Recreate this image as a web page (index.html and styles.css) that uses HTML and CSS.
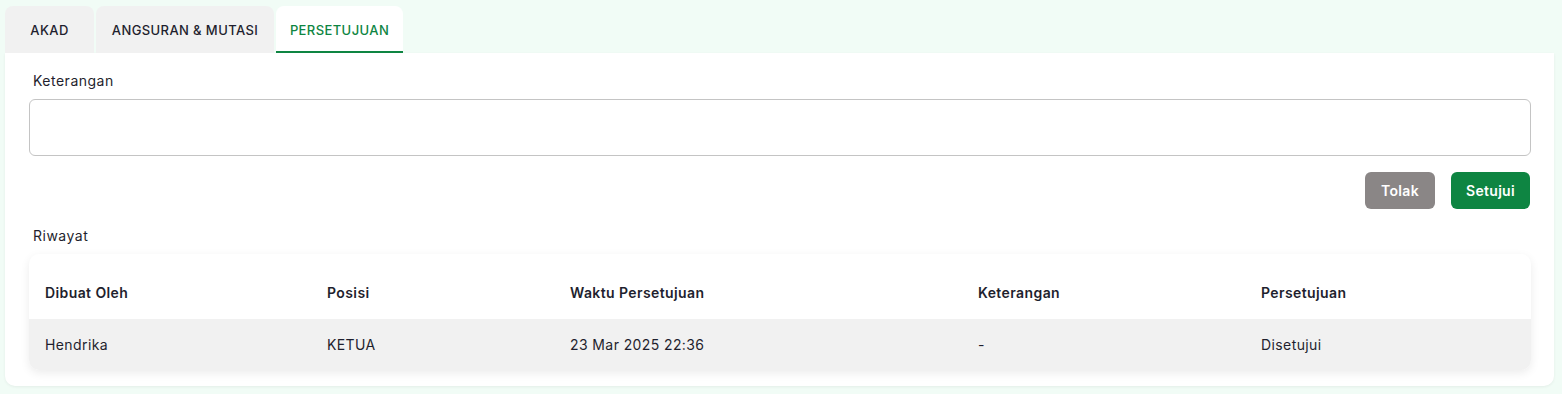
FILE: index.html
```html
<!DOCTYPE html>
<html lang="id">
<head>
    <meta charset="UTF-8">
    <meta name="viewport" content="width=device-width, initial-scale=1.0">
    <title>Persetujuan</title>
    <link rel="stylesheet" href="styles.css">
</head>
<body>
    <div class="tabs">
        <div class="tab tab-akad">AKAD</div>
        <div class="tab tab-angsuran">ANGSURAN &amp; MUTASI</div>
        <div class="tab tab-persetujuan active">PERSETUJUAN</div>
    </div>
    <div class="card">
        <label class="field-label" for="keterangan">Keterangan</label>
        <textarea id="keterangan" class="textarea"></textarea>
        <div class="actions">
            <button class="btn btn-reject">Tolak</button>
            <button class="btn btn-approve">Setujui</button>
        </div>
        <div class="field-label history-label">Riwayat</div>
        <div class="table-wrap">
            <table class="history">
                <thead>
                    <tr>
                        <th class="col-by">Dibuat Oleh</th>
                        <th class="col-pos">Posisi</th>
                        <th class="col-time">Waktu Persetujuan</th>
                        <th class="col-note">Keterangan</th>
                        <th class="col-status">Persetujuan</th>
                    </tr>
                </thead>
                <tbody>
                    <tr>
                        <td>Hendrika</td>
                        <td>KETUA</td>
                        <td>23 Mar 2025 22:36</td>
                        <td>-</td>
                        <td>Disetujui</td>
                    </tr>
                </tbody>
            </table>
        </div>
    </div>
</body>
</html>
```

FILE: styles.css
```css
body {
    font-family: Inter, "Open Sans", sans-serif;
    background-color: #f1fcf6;
    color: #1f1f2e;
    margin: 0;
    padding: 6px 8px 8px 5px;
    font-size: 14px;
}
.tabs {
    display: flex;
    gap: 2px;
}
.tab {
    height: 47px;
    display: flex;
    align-items: center;
    justify-content: center;
    background-color: #f1f1f1;
    border-radius: 8px 8px 0 0;
    font-size: 13px;
    font-weight: 500;
    letter-spacing: 0.4px;
    color: #1f1f2e;
    box-sizing: border-box;
}
.tab-akad {
    width: 89px;
}
.tab-angsuran {
    width: 178px;
}
.tab-persetujuan {
    width: 127px;
}
.tab.active {
    background-color: #fff;
    color: #0e8542;
    border-bottom: 2px solid #0e8542;
    padding-top: 2px;
}
.card {
    background-color: #fff;
    border-radius: 0 0 10px 10px;
    padding: 17px 23px 16px 24px;
    box-shadow: 0 1px 3px rgba(0, 0, 0, 0.06);
}
.field-label {
    display: block;
    padding-left: 4px;
    line-height: 21px;
    letter-spacing: 0.5px;
    margin-bottom: 8px;
}
.textarea {
    display: block;
    width: 100%;
    height: 57px;
    box-sizing: border-box;
    border: 1px solid #c4c4c4;
    border-radius: 6px;
    resize: none;
    font-family: inherit;
    font-size: 14px;
    outline: none;
}
.actions {
    display: flex;
    justify-content: flex-end;
    gap: 16px;
    margin-top: 16px;
    padding-right: 1px;
}
.btn {
    height: 37px;
    border: none;
    border-radius: 6px;
    color: #fff;
    font-family: inherit;
    font-size: 14px;
    font-weight: 600;
    letter-spacing: 0.3px;
    cursor: pointer;
}
.btn-reject {
    width: 70px;
    background-color: #8a8686;
}
.btn-approve {
    width: 79px;
    background-color: #0e8542;
}
.history-label {
    margin-top: 16px;
    margin-bottom: 8px;
}
.table-wrap {
    border-radius: 10px;
    overflow: hidden;
    box-shadow: 0 3px 10px rgba(0, 0, 0, 0.08);
}
.history {
    width: 100%;
    border-collapse: collapse;
    table-layout: fixed;
}
.history th,
.history td {
    text-align: left;
    padding: 0 16px;
    letter-spacing: 0.4px;
}
.history th {
    height: 54px;
    font-weight: 600;
    padding-top: 11px;
}
.history td {
    height: 51px;
    background-color: #f1f1f1;
}
.col-by {
    width: 250px;
}
.col-pos {
    width: 211px;
}
.col-time {
    width: 376px;
}
.col-note {
    width: 251px;
}
```
